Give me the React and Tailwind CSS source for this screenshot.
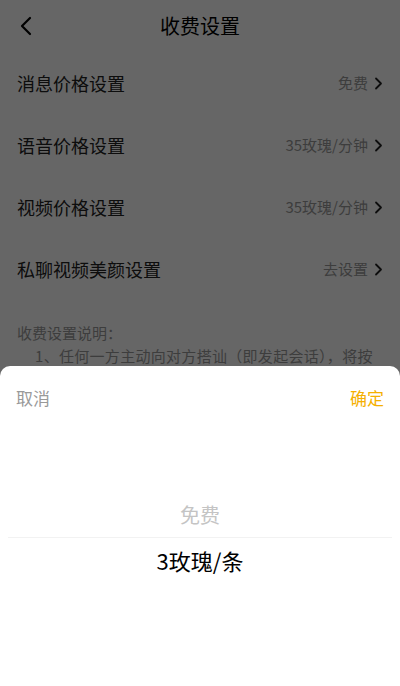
const ROWS = [
  { label: '消息价格设置', value: '免费' },
  { label: '语音价格设置', value: '35玫瑰/分钟' },
  { label: '视频价格设置', value: '35玫瑰/分钟' },
  { label: '私聊视频美颜设置', value: '去设置' },
];

const FONT = { fontFamily: '"Noto Sans CJK SC", "Noto Sans", sans-serif' };

function Chevron() {
  return (
    <svg className="w-[9px] h-[13px] ml-[6px]" viewBox="0 0 9 13" fill="none" stroke="#222" strokeWidth={1.8}>
      <polyline points="2,1.5 7,6.5 2,11.5" strokeLinecap="round" strokeLinejoin="round" />
    </svg>
  );
}

export default function App() {
  return (
    <div className="relative w-[400px] h-[686px] overflow-hidden bg-white" style={FONT}>
      {/* Page */}
      <header className="relative h-[52px] flex items-center justify-center">
        <button className="absolute left-[16px] top-[14px] w-[20px] h-[24px] flex items-center justify-center">
          <svg className="w-[12px] h-[20px]" viewBox="0 0 12 20" fill="none" stroke="#000" strokeWidth={2.2}>
            <polyline points="10,2 2,10 10,18" strokeLinecap="round" strokeLinejoin="round" />
          </svg>
        </button>
        <h1 className="text-[20px] text-black leading-none">收费设置</h1>
      </header>

      <ul>
        {ROWS.map(({ label, value }) => (
          <li key={label} className="h-[62px] flex items-center justify-between pl-[17px] pr-[17px]">
            <span className="text-[18px] text-[#222]">{label}</span>
            <span className="flex items-center text-[15px] text-[#999]">
              {value}
              <Chevron />
            </span>
          </li>
        ))}
      </ul>

      <div className="px-[17px] pt-[21px] text-[15px] text-[#999] leading-[23px]">
        <p>收费设置说明：</p>
        <p className="pl-[18px] pr-[4px] tracking-[0.3px]">1、任何一方主动向对方搭讪（即发起会话），将按照对方设置的价格扣费。</p>
      </div>

      {/* Overlay */}
      <div className="absolute inset-0 bg-black/60" />

      {/* Bottom sheet */}
      <div className="absolute left-0 right-0 bottom-0 h-[320px] bg-white rounded-t-[10px] flex flex-col">
        <div className="h-[64px] flex items-center justify-between px-[16px]">
          <button className="text-[17px] text-[#999]">取消</button>
          <button className="text-[17px] text-[#f5b000]">确定</button>
        </div>
        <div className="h-[63px]" />
        <div className="h-[44px] flex items-center justify-center text-[20px] text-[#c4c4c4]">免费</div>
        <div className="mx-[8px] h-px bg-[#f2f2f2]" />
        <div className="h-[44px] flex items-center justify-center text-[22px] text-black">3玫瑰/条</div>
      </div>
    </div>
  );
}
